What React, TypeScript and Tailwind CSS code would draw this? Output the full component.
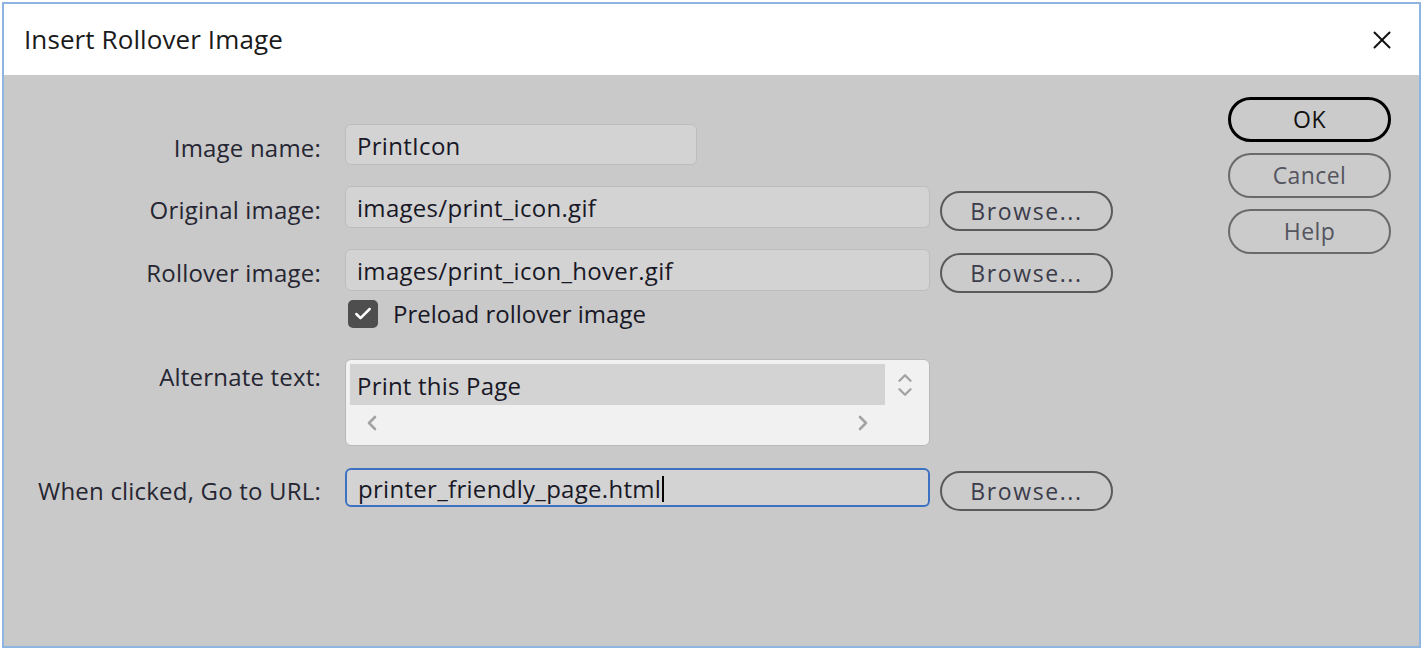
import { Check, X, ChevronUp, ChevronDown, ChevronLeft, ChevronRight } from "lucide-react"

const font = { fontFamily: "'Open Sans', 'Noto Sans', sans-serif" }

function Label({ children, top }: { children: React.ReactNode; top?: boolean }) {
  return (
    <div
      className={`w-[318px] shrink-0 pr-[1px] text-right text-[24px] leading-none tracking-[0.2px] text-[#262633] ${
        top ? "self-start pt-[6px]" : "self-center mt-[6px]"
      }`}
    >
      {children}
    </div>
  )
}

function Field({ value, width, focused }: { value: string; width: string; focused?: boolean }) {
  return (
    <div
      className={`${width} h-full flex items-center pl-[11px] pt-[2px] rounded-[6px] bg-[#d3d3d3] text-[24px] leading-none text-[#181826] tracking-[0.3px] ${
        focused ? "border-2 border-[#3d72c2]" : "border border-[#bdbdbd]"
      }`}
    >
      {value}
      {focused && <span className="ml-[1px] inline-block w-[2px] h-[26px] bg-black" />}
    </div>
  )
}

function Browse({ offset }: { offset: string }) {
  return (
    <button
      className={`${offset} w-[173px] h-[40px] rounded-full border-2 border-[#5a5a5a] bg-[#cbcbcb] text-[23px] leading-none text-[#3c3c4a] tracking-[1.6px]`}
    >
      Browse...
    </button>
  )
}

function SideButton({ label, primary }: { label: string; primary?: boolean }) {
  return (
    <button
      className={`w-[163px] h-[45px] rounded-full bg-[#cbcbcb] text-[23px] leading-none tracking-[0.4px] ${
        primary ? "border-[3px] border-black text-[#111]" : "border-2 border-[#6a6a6a] text-[#55555f]"
      }`}
    >
      {label}
    </button>
  )
}

export default function App() {
  return (
    <div className="w-[1425px] h-[651px] bg-white pl-[2px] pt-[2px]" style={font}>
      <div className="w-[1419px] h-[646px] border-2 border-[#8eb4e2] flex flex-col">
        {/* Title bar */}
        <div className="h-[71px] shrink-0 bg-white flex items-center justify-between pl-[20px] pr-[22px]">
          <span className="text-[26px] leading-none text-[#1a1a1a] pb-[2px] tracking-[0.1px]">Insert Rollover Image</span>
          <X size={30} strokeWidth={1.6} className="text-[#111]" />
        </div>

        {/* Body */}
        <div className="flex-1 bg-[#c9c9c9] flex">
          <div className="flex-1 flex flex-col pt-[49px]">
            <div className="flex h-[41px] gap-[23px]">
              <Label>Image name:</Label>
              <Field value="PrintIcon" width="w-[352px]" />
            </div>

            <div className="flex h-[42px] gap-[23px] mt-[21px]">
              <Label>Original image:</Label>
              <div className="flex gap-[10px] items-start">
                <Field value="images/print_icon.gif" width="w-[585px]" />
                <Browse offset="mt-[5px]" />
              </div>
            </div>

            <div className="flex h-[42px] gap-[23px] mt-[21px]">
              <Label>Rollover image:</Label>
              <div className="flex gap-[10px] items-start">
                <Field value="images/print_icon_hover.gif" width="w-[585px]" />
                <Browse offset="mt-[4px]" />
              </div>
            </div>

            <div className="flex h-[28px] mt-[9px] items-center pl-[344px]">
              <div className="w-[30px] h-[28px] rounded-[5px] bg-[#4e4e4e] flex items-center justify-center">
                <Check size={20} strokeWidth={3} className="text-white" />
              </div>
              <span className="ml-[15px] text-[24px] leading-none text-[#181826] tracking-[0px]">
                Preload rollover image
              </span>
            </div>

            <div className="flex h-[87px] gap-[23px] mt-[31px]">
              <Label top>Alternate text:</Label>
              <div className="w-[585px] h-full rounded-[6px] border border-[#b8b8b8] bg-[#f1f1f1] p-[4px] flex flex-col">
                <div className="flex h-[41px]">
                  <div className="flex-1 bg-[#d3d3d3] pl-[7px] pt-[2px] flex items-center text-[24px] leading-none text-[#181826] tracking-[0.2px]">
                    Print this Page
                  </div>
                  <div className="w-[40px] flex flex-col items-center justify-center text-[#a3a3a3] -space-y-[8px]">
                    <ChevronUp size={22} strokeWidth={2.6} />
                    <ChevronDown size={22} strokeWidth={2.6} />
                  </div>
                </div>
                <div className="flex-1 flex items-center justify-between pl-[10px] pr-[50px] text-[#a3a3a3]">
                  <ChevronLeft size={24} strokeWidth={2.6} />
                  <ChevronRight size={24} strokeWidth={2.6} />
                </div>
              </div>
            </div>

            <div className="flex h-[39px] gap-[23px] mt-[22px]">
              <Label>When clicked, Go to URL:</Label>
              <div className="flex gap-[10px] items-start h-full">
                <Field value="printer_friendly_page.html" width="w-[585px]" focused />
                <Browse offset="mt-[3px]" />
              </div>
            </div>
          </div>

          {/* Right buttons */}
          <div className="flex flex-col gap-[11px] pt-[22px] pr-[28px]">
            <SideButton label="OK" primary />
            <SideButton label="Cancel" />
            <SideButton label="Help" />
          </div>
        </div>
      </div>
    </div>
  )
}
